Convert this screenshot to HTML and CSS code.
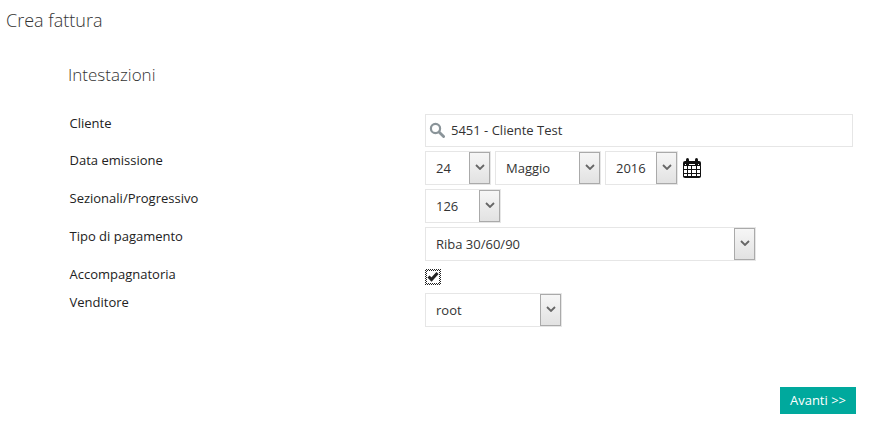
FILE: index.html
```html
<!DOCTYPE html>
<html lang="it">
<head>
    <meta charset="UTF-8">
    <title>Crea fattura</title>
    <link rel="stylesheet" href="styles.css">
</head>
<body>
    <h1 class="page-title">Crea fattura</h1>
    <form class="invoice">
        <h2 class="section-title">Intestazioni</h2>
        <div class="fields">
            <label class="field-label">Cliente</label>
            <div class="search-box">
                <svg class="search-icon" width="16" height="16" viewBox="0 0 16 16">
                    <circle cx="6.5" cy="6.5" r="4.6" fill="none" stroke="#8a9499" stroke-width="2.2"/>
                    <path d="M10 10l4.6 4.6" stroke="#8a9499" stroke-width="2.8" stroke-linecap="round"/>
                </svg>
                <span>5451 - Cliente Test</span>
            </div>

            <label class="field-label">Data emissione</label>
            <div class="field-row">
                <div class="select day"><select><option>24</option></select><span class="arrow"><svg width="10" height="6" viewBox="0 0 10 6"><path d="M1 1l4 4 4-4" fill="none" stroke="#666" stroke-width="1.8"/></svg></span></div>
                <div class="select month"><select><option>Maggio</option></select><span class="arrow"><svg width="10" height="6" viewBox="0 0 10 6"><path d="M1 1l4 4 4-4" fill="none" stroke="#666" stroke-width="1.8"/></svg></span></div>
                <div class="select year"><select><option>2016</option></select><span class="arrow"><svg width="10" height="6" viewBox="0 0 10 6"><path d="M1 1l4 4 4-4" fill="none" stroke="#666" stroke-width="1.8"/></svg></span></div>
                <svg class="calendar" width="20" height="20" viewBox="0 0 20 20">
                    <rect x="1" y="3" width="18" height="17" rx="2" fill="#111"/>
                    <rect x="4" y="0" width="3" height="6" rx="1.5" fill="#111"/>
                    <rect x="13" y="0" width="3" height="6" rx="1.5" fill="#111"/>
                    <path d="M3 6.5h1M7 6.5h6M16 6.5h1" stroke="#fff" stroke-width="1"/>
                    <path d="M1.5 7.5h17v11h-17zM1.5 11.5h17M1.5 15.5h17M5.5 7.5v11M9.5 7.5v11M14.5 7.5v11" fill="#fff" stroke="#111" stroke-width="1"/>
                </svg>
            </div>

            <label class="field-label">Sezionali/Progressivo</label>
            <div class="field-row">
                <div class="select number"><select><option>126</option></select><span class="arrow"><svg width="10" height="6" viewBox="0 0 10 6"><path d="M1 1l4 4 4-4" fill="none" stroke="#666" stroke-width="1.8"/></svg></span></div>
            </div>

            <label class="field-label">Tipo di pagamento</label>
            <div class="field-row">
                <div class="select payment"><select><option>Riba 30/60/90</option></select><span class="arrow"><svg width="10" height="6" viewBox="0 0 10 6"><path d="M1 1l4 4 4-4" fill="none" stroke="#666" stroke-width="1.8"/></svg></span></div>
            </div>

            <label class="field-label">Accompagnatoria</label>
            <div class="check-row">
                <span class="check">
                    <svg width="12" height="12" viewBox="0 0 12 12"><path d="M1.5 5.5l3 3 6-6.5" fill="none" stroke="#222" stroke-width="3"/></svg>
                </span>
            </div>

            <label class="field-label">Venditore</label>
            <div class="field-row">
                <div class="select seller-box"><select><option>root</option></select><span class="arrow"><svg width="10" height="6" viewBox="0 0 10 6"><path d="M1 1l4 4 4-4" fill="none" stroke="#666" stroke-width="1.8"/></svg></span></div>
            </div>
        </div>
        <div class="actions">
            <button type="button" class="next-btn">Avanti &gt;&gt;</button>
        </div>
    </form>
</body>
</html>
```

FILE: styles.css
```css
* {
    box-sizing: border-box;
}
body {
    font-family: "Open Sans", Arial, sans-serif;
    font-size: 13px;
    color: #333;
    background: #fff;
    margin: 0;
}
.page-title {
    font-size: 18px;
    font-weight: 300;
    line-height: 24px;
    color: #333;
    margin: 0;
    padding: 8px 0 0 6px;
}
.invoice {
    padding: 0 14px 0 68px;
}
.section-title {
    font-size: 17px;
    font-weight: 300;
    line-height: 22px;
    color: #333;
    margin: 0;
    padding-top: 32px;
}
.fields {
    display: grid;
    grid-template-columns: 357px 1fr;
    margin-top: 28px;
}
.field-label {
    padding-left: 1.5px;
    line-height: 18px;
    color: #222;
}
.search-box {
    display: flex;
    align-items: center;
    gap: 6px;
    height: 33px;
    width: 428px;
    padding: 0 0 1px 3px;
    margin-bottom: 4px;
    border: 1px solid #e6e6e6;
    color: #333;
}
.field-row {
    display: flex;
    gap: 4px;
    margin-bottom: 4px;
}
.select {
    position: relative;
    height: 34px;
}
.select select {
    appearance: none;
    display: block;
    width: 100%;
    height: 100%;
    font: inherit;
    color: #333;
    background: #fff;
    border: 1px solid #e6e6e6;
    border-radius: 0;
    padding: 0 0 0 10px;
}
.arrow {
    position: absolute;
    top: 1px;
    right: 1px;
    bottom: 1px;
    width: 21px;
    display: flex;
    align-items: center;
    justify-content: center;
    padding-bottom: 3px;
    background: linear-gradient(#f6f6f6, #e2e2e2);
    border: 1px solid #aaa;
}
.day {
    width: 66px;
}
.month {
    width: 106px;
}
.year {
    width: 73px;
}
.number {
    width: 76px;
}
.payment {
    width: 331px;
}
.seller-box {
    width: 137px;
}
.calendar {
    align-self: center;
}
.check-row {
    height: 28px;
    padding-top: 4px;
}
.check {
    display: block;
    width: 16px;
    height: 16px;
    padding: 2px;
    background: repeating-conic-gradient(#222 0 25%, #fff 0 50%) 0 0 / 2px 2px;
}
.check svg {
    display: block;
    background: #fff;
}
.actions {
    display: flex;
    justify-content: flex-end;
    margin-top: 56px;
}
.next-btn {
    width: 76px;
    height: 27px;
    font: inherit;
    font-size: 13px;
    color: #fff;
    background: #00a99d;
    border: none;
    cursor: pointer;
    padding: 0 0 2px;
}
```
